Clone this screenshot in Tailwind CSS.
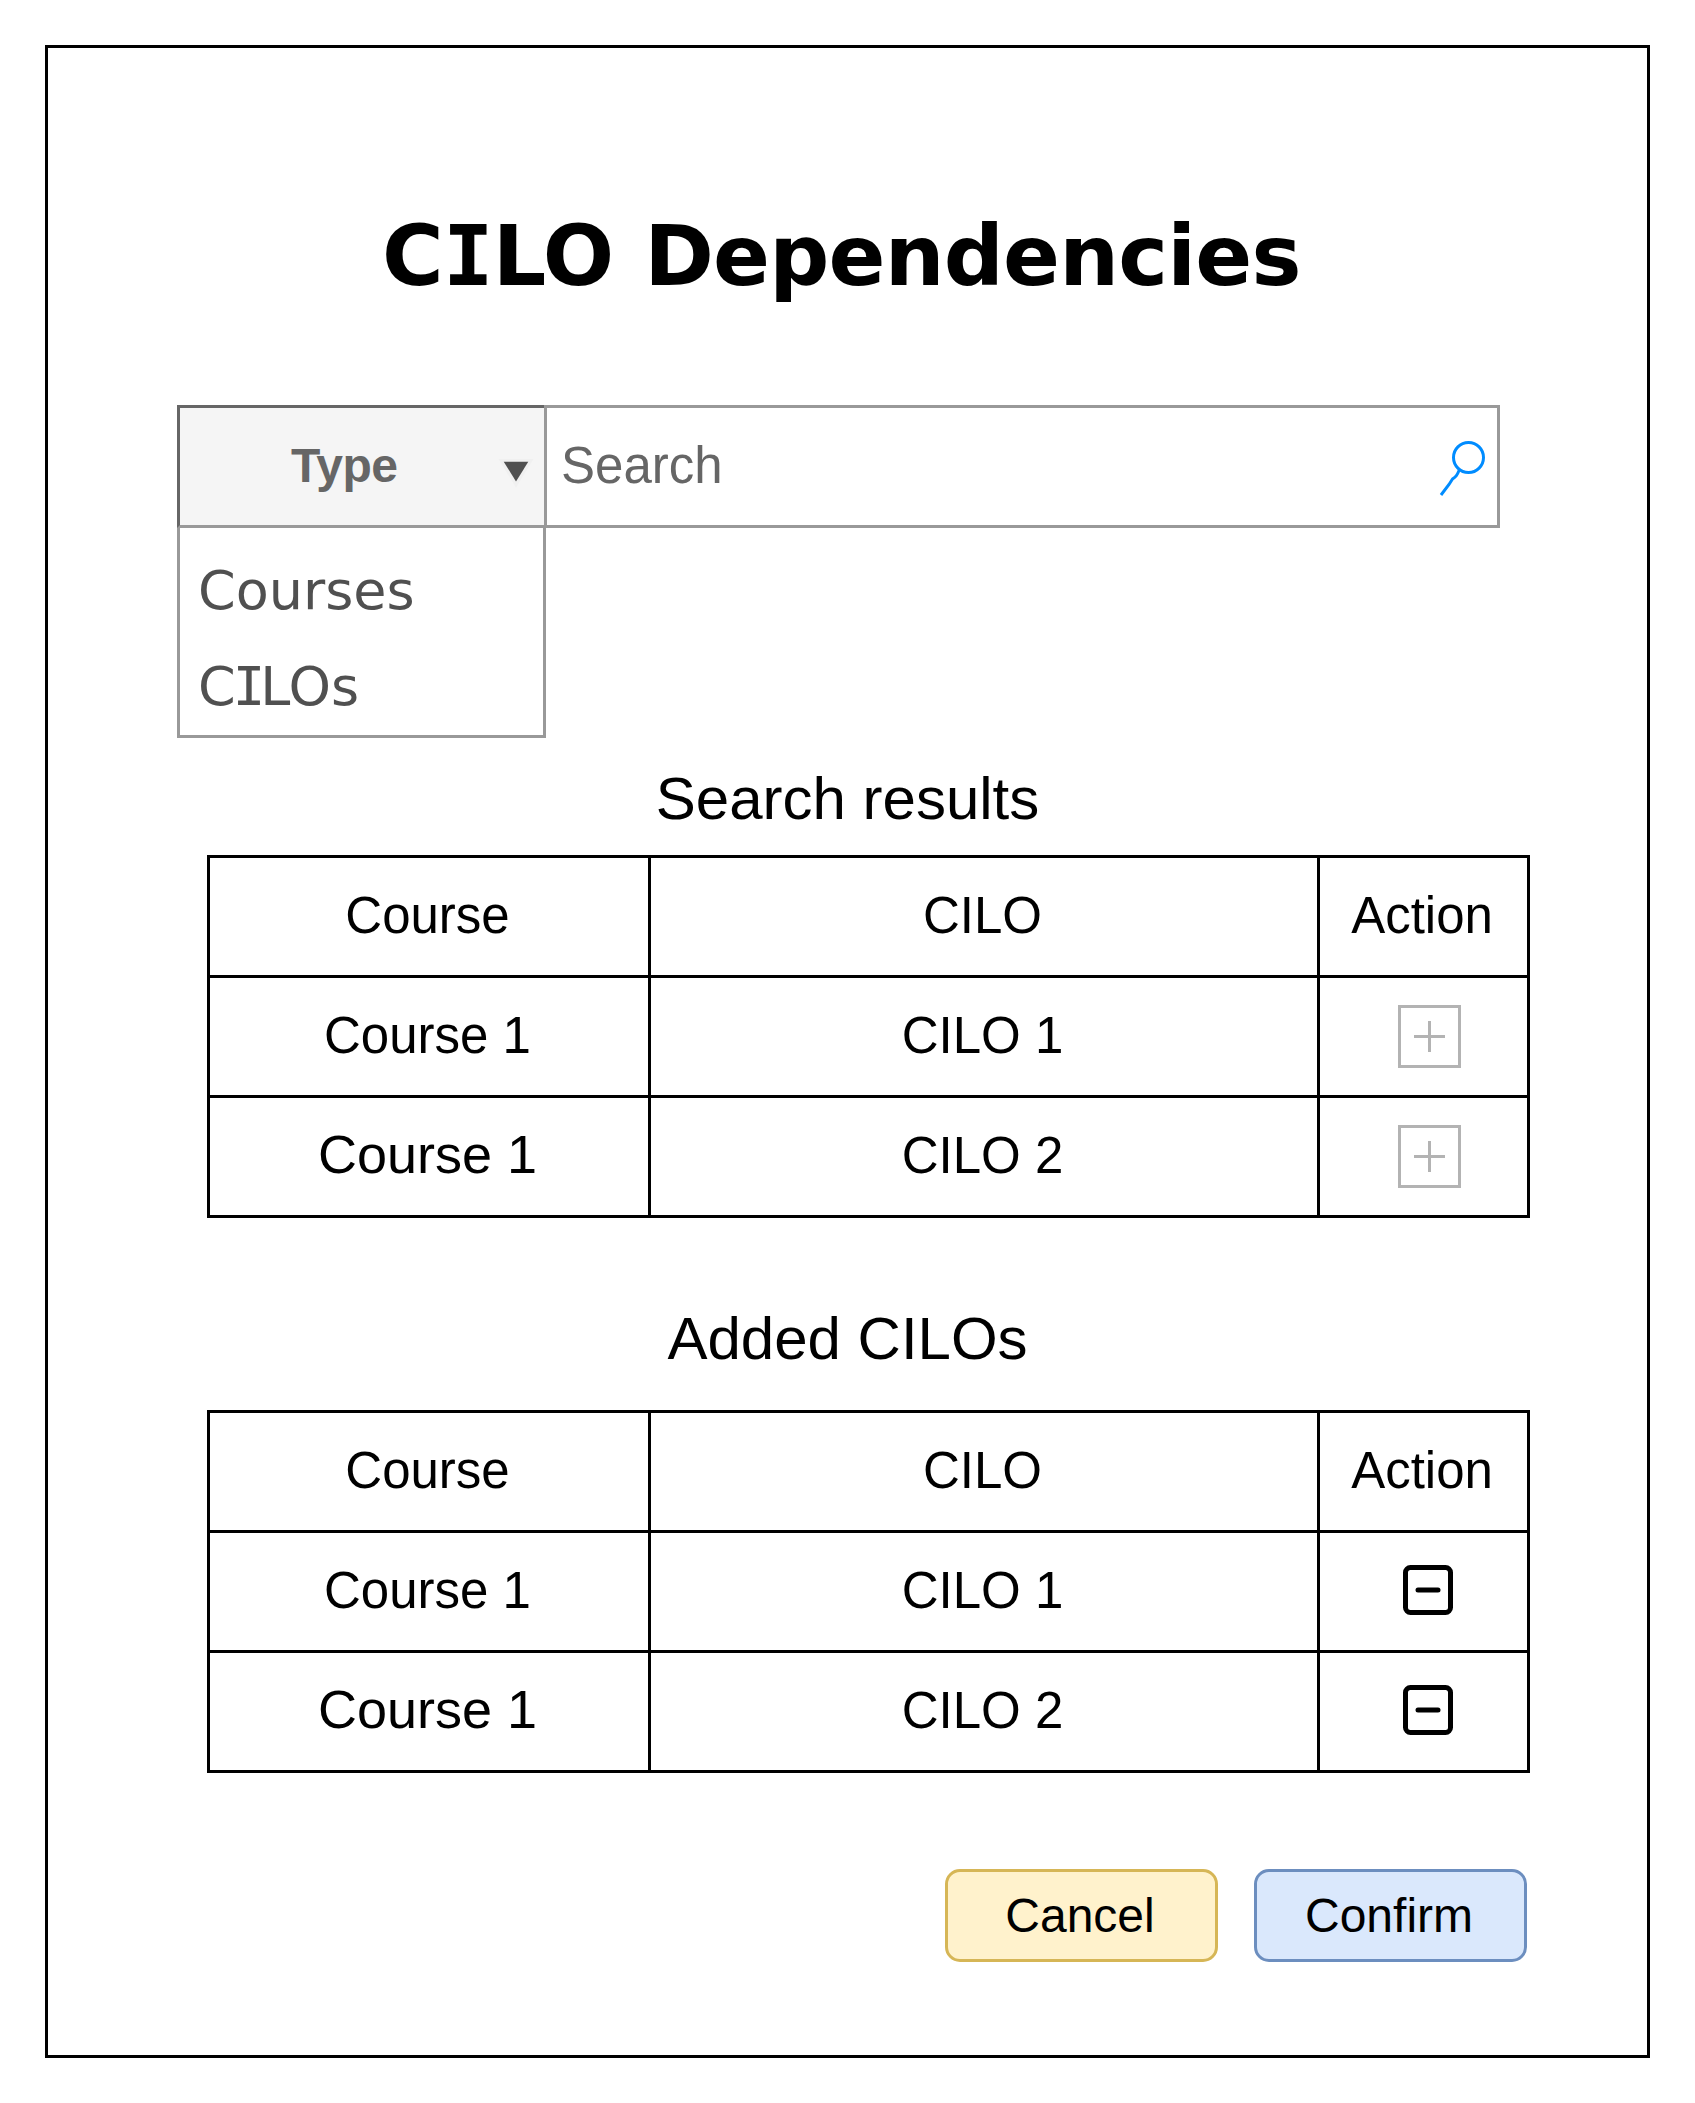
<!DOCTYPE html>
<html lang="en">
<head>
<meta charset="utf-8">
<title>CILO Dependencies</title>
<script src="https://cdn.jsdelivr.net/npm/@tailwindcss/browser@4"></script>
</head>
<body class="bg-white">
<main class="ml-[45px] mt-[45px] flex h-[2013px] w-[1605px] flex-col border-3 border-black font-['Liberation_Sans',Arial,sans-serif] text-[51px] leading-[60px] text-black">
  <h1 class="mt-[158px] h-[100px] pl-[334px] font-['DejaVu_Sans',Verdana,sans-serif] text-[84px] leading-[100px] font-bold whitespace-nowrap"><span class="mr-[1.5px] tracking-[-0.7px]">C<span class="font-['DejaVu_Sans_Mono',monospace]">I</span>LO</span> <span class="tracking-[-0.8px]">Dependencies</span></h1>

  <!-- Search bar with type filter -->
  <section class="mt-[99px] ml-[129px] h-[333px] w-[1323px]">
    <div class="flex h-[123px]">
      <button class="flex w-[367px] items-center border-3 border-r-0 border-[#666666] border-b-[#999999] bg-[#f5f5f5] pl-[111px] text-[48px] font-bold text-[#666666]">
        <span class="w-[207px] pb-[1px] text-left tracking-[-0.5px]">Type</span>
        <svg class="mt-[14px] h-[29px] w-[36px]" viewBox="0 0 36 29"><path d="M0.500 0H35.500L18 28.500Z" fill="#f0f0f0"/><path d="M5.700 2.700H30.300L18 22.500Z" fill="#505050"/></svg>
      </button>
      <div class="flex flex-1 items-center justify-between border-3 border-[#999999] bg-white pl-[14px] text-[#666666]">
        <span class="pb-[1px]">Search</span>
        <svg class="mr-[9px] h-[60px] w-[51px]" viewBox="0 0 51 60" fill="none" stroke="#008cff" stroke-width="3"><circle cx="31.500" cy="20.500" r="15"/><path d="M22.500 32.500C20 38.500 19 39.500 15.500 42L12 47.500L4 58"/></svg>
      </div>
    </div>
    <ul class="-mt-[3px] h-[213px] w-[369px] border-3 border-[#999999] bg-white pt-[15px] pl-[18px] font-['DejaVu_Sans',Verdana,sans-serif] text-[54px] leading-[96px] text-[#505050]">
      <li class="h-[96px]">Courses</li>
      <li class="h-[96px]">C<span class="mr-[-5px] ml-[-3px] font-['DejaVu_Sans_Mono',monospace]">I</span>LOs</li>
    </ul>
  </section>

  <h2 class="mt-[26px] text-center text-[60px] leading-[70px]">Search results</h2>
  <div class="mt-[21px] ml-[159px] grid w-[1323px] grid-cols-[441px_669px_207px] grid-rows-[120px_120px_117px] border-3 border-black text-center *:flex *:items-center *:justify-center *:border-black">
    <div class="border-r-3 border-b-3 pr-[3px] pb-[2px]">Course</div><div class="border-r-3 border-b-3 pr-[3px] pb-[2px]">CILO</div><div class="border-b-3 pr-[3px] pb-[2px]">Action</div>
    <div class="border-r-3 border-b-3 pr-[3px] pb-[2px]">Course 1</div><div class="border-r-3 border-b-3 pr-[3px] pb-[2px]">CILO 1</div>
    <div class="border-b-3 pl-[12px]"><svg class="size-[63px]" viewBox="0 0 63 63" fill="none" stroke="#b3b3b3" stroke-width="3"><path d="M1.500 1.500H61.500V61.500H1.500ZM16 31.500H47M31.500 16V47"/></svg></div>
    <div class="border-r-3 pr-[3px] pb-[6px] text-[54px]">Course 1</div><div class="border-r-3 pr-[3px] pb-[2px]">CILO 2</div>
    <div class="pl-[12px]"><svg class="size-[63px]" viewBox="0 0 63 63" fill="none" stroke="#b3b3b3" stroke-width="3"><path d="M1.500 1.500H61.500V61.500H1.500ZM16 31.500H47M31.500 16V47"/></svg></div>
  </div>

  <h2 class="mt-[86px] text-center text-[60px] leading-[70px]">Added CILOs</h2>
  <div class="mt-[36px] ml-[159px] grid w-[1323px] grid-cols-[441px_669px_207px] grid-rows-[120px_120px_117px] border-3 border-black text-center *:flex *:items-center *:justify-center *:border-black">
    <div class="border-r-3 border-b-3 pr-[3px] pb-[2px]">Course</div><div class="border-r-3 border-b-3 pr-[3px] pb-[2px]">CILO</div><div class="border-b-3 pr-[3px] pb-[2px]">Action</div>
    <div class="border-r-3 border-b-3 pr-[3px] pb-[2px]">Course 1</div><div class="border-r-3 border-b-3 pr-[3px] pb-[2px]">CILO 1</div>
    <div class="border-b-3 pb-[3px] pl-[9px]"><svg class="size-[60px]" viewBox="0 0 60 60" fill="none" stroke="#000" stroke-width="5" stroke-linecap="round"><rect x="7.500" y="7.500" width="45" height="45" rx="5"/><path d="M20 30H40"/></svg></div>
    <div class="border-r-3 pr-[3px] pb-[6px] text-[54px]">Course 1</div><div class="border-r-3 pr-[3px] pb-[2px]">CILO 2</div>
    <div class="pb-[3px] pl-[9px]"><svg class="size-[60px]" viewBox="0 0 60 60" fill="none" stroke="#000" stroke-width="5" stroke-linecap="round"><rect x="7.500" y="7.500" width="45" height="45" rx="5"/><path d="M20 30H40"/></svg></div>
  </div>

  <div class="mt-[96px] mr-[120px] flex justify-end gap-[36px] text-[48px]">
    <button class="h-[93px] w-[273px] rounded-[15px] border-3 border-[#d6b656] bg-[#fff2cc] pr-[3px]">Cancel</button>
    <button class="h-[93px] w-[273px] rounded-[15px] border-3 border-[#6c8ebf] bg-[#dae8fc] pr-[3px]">Confirm</button>
  </div>
</main>
</body>
</html>
